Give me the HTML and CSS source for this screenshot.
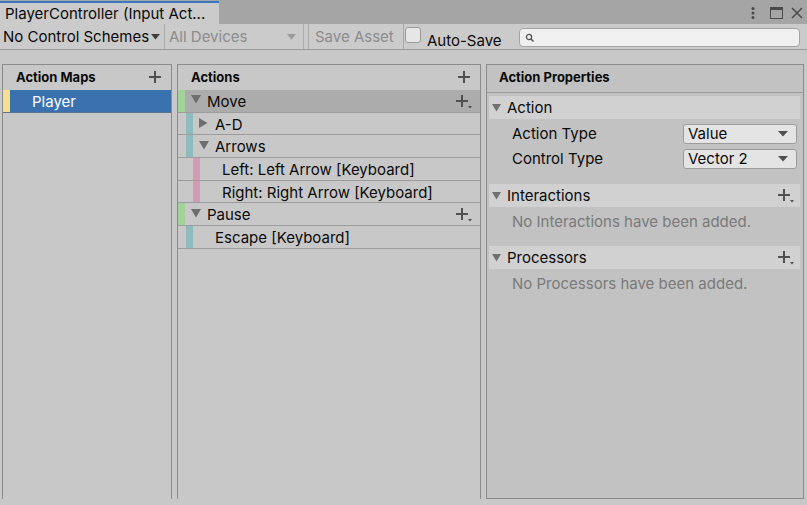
FILE: index.html
```html
<!DOCTYPE html>
<html>
<head>
<meta charset="utf-8">
<link rel="stylesheet" href="styles.css">
</head>
<body>
<div class="tabbar">
  <div class="tab">PlayerController (Input Act...</div>
  <div class="win-icons">
    <svg class="kebab" width="4" height="12" viewBox="0 0 4 12"><circle cx="2" cy="1.6" r="1.5"/><circle cx="2" cy="6" r="1.5"/><circle cx="2" cy="10.4" r="1.5"/></svg>
    <svg class="maxi" width="13" height="12" viewBox="0 0 13 12"><rect x="0.5" y="0.5" width="12" height="11" fill="none" stroke="#4a4a4a"/><rect x="0" y="0" width="13" height="3" fill="#4a4a4a"/></svg>
    <svg class="close" width="12" height="12" viewBox="0 0 12 12"><path d="M1 1L11 11M11 1L1 11" stroke="#4a4a4a" stroke-width="1.5"/></svg>
  </div>
</div>
<div class="toolbar">
  <div class="tb-dd schemes">No Control Schemes<svg class="tri" width="9" height="6" viewBox="0 0 9 6"><path d="M0 0H9L4.5 5.5Z" fill="#404040"/></svg></div>
  <div class="tb-dd devices">All Devices<svg class="tri" width="9" height="6" viewBox="0 0 9 6"><path d="M0 0H9L4.5 5.5Z" fill="#9a9a9a"/></svg></div>
  <div class="tb-gap"></div>
  <div class="tb-btn">Save Asset</div>
  <div class="toggle"><span class="checkbox"></span><span class="toggle-label">Auto-Save</span></div>
  <div class="search"><svg width="10" height="10" viewBox="0 0 10 10"><circle cx="4" cy="4" r="2.6" fill="none" stroke="#555" stroke-width="1.3"/><path d="M6 6L8.5 8.5" stroke="#555" stroke-width="1.6"/></svg></div>
</div>
<div class="main">
  <section class="panel maps">
    <div class="phead"><span>Action Maps</span><svg class="plus" width="12" height="12" viewBox="0 0 12 12"><path d="M6 0V12M0 6H12" stroke="#505050" stroke-width="2"/></svg></div>
    <div class="row sel-blue"><span class="stripe yellow"></span><span class="label pl">Player</span></div>
  </section>
  <section class="panel actions">
    <div class="phead"><span>Actions</span><svg class="plus" width="12" height="12" viewBox="0 0 12 12"><path d="M6 0V12M0 6H12" stroke="#505050" stroke-width="2"/></svg></div>
    <div class="row sel-gray">
      <span class="stripe green"></span>
      <span class="fold"><svg width="10" height="9" viewBox="0 0 10 9"><path d="M0 0H10L5 8.5Z" fill="#6e6e6e"/></svg></span>
      <span class="label">Move</span>
      <svg class="addm" width="16" height="14" viewBox="0 0 16 14"><path d="M6 0V12M0 6H12" stroke="#505050" stroke-width="2"/><path d="M12 11H16L14 13.5Z" fill="#505050"/></svg>
    </div>
    <div class="row">
      <span class="stripe teal lv1"></span>
      <span class="fold"><svg width="9" height="10" viewBox="0 0 9 10"><path d="M0 0V10L8.5 5Z" fill="#6e6e6e"/></svg></span>
      <span class="label">A-D</span>
    </div>
    <div class="row">
      <span class="stripe teal lv1"></span>
      <span class="fold"><svg width="10" height="9" viewBox="0 0 10 9"><path d="M0 0H10L5 8.5Z" fill="#6e6e6e"/></svg></span>
      <span class="label">Arrows</span>
    </div>
    <div class="row">
      <span class="stripe pink lv2"></span>
      <span class="label nofold">Left: Left Arrow [Keyboard]</span>
    </div>
    <div class="row">
      <span class="stripe pink lv2"></span>
      <span class="label nofold">Right: Right Arrow [Keyboard]</span>
    </div>
    <div class="row">
      <span class="stripe green"></span>
      <span class="fold"><svg width="10" height="9" viewBox="0 0 10 9"><path d="M0 0H10L5 8.5Z" fill="#6e6e6e"/></svg></span>
      <span class="label">Pause</span>
      <svg class="addm" width="16" height="14" viewBox="0 0 16 14"><path d="M6 0V12M0 6H12" stroke="#505050" stroke-width="2"/><path d="M12 11H16L14 13.5Z" fill="#505050"/></svg>
    </div>
    <div class="row">
      <span class="stripe teal lv1"></span>
      <span class="label nofold">Escape [Keyboard]</span>
    </div>
  </section>
  <section class="panel props">
    <div class="phead props-head"><span>Action Properties</span></div>
    <div class="props-body">
      <div class="fold-bar">
        <span class="bfold"><svg width="9" height="8" viewBox="0 0 9 8"><path d="M0 0H9L4.5 7.5Z" fill="#707070"/></svg></span>
        <span>Action</span>
      </div>
      <div class="prop-row first">
        <span class="plabel">Action Type</span>
        <div class="dropdown"><span>Value</span><svg width="10" height="6" viewBox="0 0 10 6"><path d="M0 0H10L5 5.5Z" fill="#505050"/></svg></div>
      </div>
      <div class="prop-row">
        <span class="plabel">Control Type</span>
        <div class="dropdown"><span>Vector 2</span><svg width="10" height="6" viewBox="0 0 10 6"><path d="M0 0H10L5 5.5Z" fill="#505050"/></svg></div>
      </div>
      <div class="fold-bar section">
        <span class="bfold"><svg width="9" height="8" viewBox="0 0 9 8"><path d="M0 0H9L4.5 7.5Z" fill="#707070"/></svg></span>
        <span>Interactions</span>
        <svg class="addm" width="16" height="14" viewBox="0 0 16 14"><path d="M6 0V12M0 6H12" stroke="#505050" stroke-width="2"/><path d="M12 11H16L14 13.5Z" fill="#505050"/></svg>
      </div>
      <div class="empty">No Interactions have been added.</div>
      <div class="fold-bar section2">
        <span class="bfold"><svg width="9" height="8" viewBox="0 0 9 8"><path d="M0 0H9L4.5 7.5Z" fill="#707070"/></svg></span>
        <span>Processors</span>
        <svg class="addm" width="16" height="14" viewBox="0 0 16 14"><path d="M6 0V12M0 6H12" stroke="#505050" stroke-width="2"/><path d="M12 11H16L14 13.5Z" fill="#505050"/></svg>
      </div>
      <div class="empty">No Processors have been added.</div>
    </div>
  </section>
</div>
</body>
</html>
```

FILE: styles.css
```css
* { box-sizing: border-box; }
html, body { margin: 0; padding: 0; }
body {
  width: 807px;
  height: 505px;
  overflow: hidden;
  background: #c8c8c8;
  font-family: Inter, "Noto Sans", sans-serif;
  font-size: 15px;
  color: #0a0a0a;
}

.tabbar {
  height: 24px;
  background: #a5a5a5;
  display: flex;
  justify-content: space-between;
}
.tab {
  width: 219px;
  margin-top: 1px;
  border-top: 2px solid #3b78c0;
  background: #cbcbcb;
  padding-left: 5px;
  line-height: 21px;
  white-space: nowrap;
  overflow: hidden;
}
.win-icons {
  display: flex;
  align-items: center;
  padding-right: 4px;
  padding-top: 1px;
}
.kebab { fill: #4a4a4a; margin-right: 15px; }
.maxi { margin-right: 8px; }

.toolbar {
  height: 26px;
  background: #cbcbcb;
  border-bottom: 1px solid #999999;
  display: flex;
  align-items: stretch;
}
.tb-dd {
  display: flex;
  align-items: center;
  border-right: 1px solid #aaaaaa;
  white-space: nowrap;
}
.schemes { width: 165px; padding-left: 3px; }
.schemes .tri { margin-left: 2px; }
.devices {
  width: 139px;
  padding-left: 4px;
  padding-right: 7px;
  justify-content: space-between;
  color: #8c8c8c;
}
.tb-gap { width: 5px; border-right: 1px solid #aaaaaa; }
.tb-btn {
  width: 95px;
  padding-left: 6px;
  display: flex;
  align-items: center;
  color: #8c8c8c;
  border-right: 1px solid #aaaaaa;
  white-space: nowrap;
}
.toggle {
  display: flex;
  align-items: flex-start;
  margin-left: 1px;
  padding-top: 3px;
}
.checkbox {
  width: 16px;
  height: 16px;
  background: #e6e6e6;
  border: 1px solid #9a9a9a;
  border-radius: 3px;
}
.toggle-label { margin-left: 6px; padding-top: 5px; line-height: 18px; }
.search {
  margin-left: auto;
  margin-right: 7px;
  margin-top: 4px;
  width: 281px;
  height: 19px;
  background: #f0f0f0;
  border: 1px solid #a4a4a4;
  border-radius: 4px;
  display: flex;
  align-items: center;
  padding-left: 5px;
}

.main {
  display: flex;
  gap: 5px;
  padding: 14px 3px 0 2px;
  height: 455px;
}
.panel {
  height: 435px;
  border: 1px solid #8c8c8c;
  border-bottom: none;
  flex: none;
}
.maps { width: 170px; }
.actions { width: 304px; }
.props {
  width: 318px;
  border-bottom: 1px solid #8c8c8c;
  background: #c2c2c2;
}

.phead {
  height: 25px;
  display: flex;
  align-items: center;
  justify-content: space-between;
  padding: 0 10px 2px 13px;
  font-weight: 700;
  font-size: 13px;
}
.props-head {
  height: 28px;
  border-bottom: 1px solid #9a9a9a;
  padding-left: 12px;
  padding-bottom: 3px;
}

.row {
  height: 22.7px;
  padding-top: 1px;
  border-bottom: 1px solid #9c9c9c;
  display: flex;
  align-items: center;
  white-space: nowrap;
}
.stripe { width: 7px; align-self: stretch; flex: none; margin-top: -1px; }
.stripe.lv1 { margin-left: 8px; }
.stripe.lv2 { margin-left: 15px; }
.yellow { background: #f6df91; }
.green { background: #a2d29a; }
.teal { background: #8ebbbe; }
.pink { background: #d49bb6; }

.sel-blue { background: #3a72b0; border-bottom-color: #5c7390; color: #ffffff; }
.sel-gray { background: #acacac; }
.label.pl { margin-left: 22px; }
.label.nofold { margin-left: 22px; }
.fold {
  width: 16px;
  margin-left: 6px;
  display: flex;
  align-items: center;
  padding-bottom: 3px;
}
.addm { margin-left: auto; margin-right: 8px; margin-top: 1px; }

.props-body { padding: 3px 3px 0 2px; }
.fold-bar {
  height: 23px;
  background: #d1d1d1;
  display: flex;
  align-items: center;
}
.fold-bar .addm { margin-right: 6px; }
.bfold {
  width: 15px;
  margin-left: 3px;
  display: flex;
  align-items: center;
}
.fold-bar.section { margin-top: 13px; }
.fold-bar.section2 { margin-top: 11px; }

.prop-row {
  height: 25px;
  display: flex;
  align-items: center;
  justify-content: space-between;
  padding: 0 3px 0 23px;
}
.prop-row.first { margin-top: 2px; }
.dropdown {
  width: 114px;
  height: 20px;
  background: #e4e4e4;
  border: 1px solid #9c9c9c;
  border-radius: 3px;
  display: flex;
  align-items: center;
  justify-content: space-between;
  padding: 0 8px 0 4px;
}
.empty {
  height: 28px;
  display: flex;
  align-items: center;
  padding-left: 23px;
  color: #7a7a7a;
}
```
